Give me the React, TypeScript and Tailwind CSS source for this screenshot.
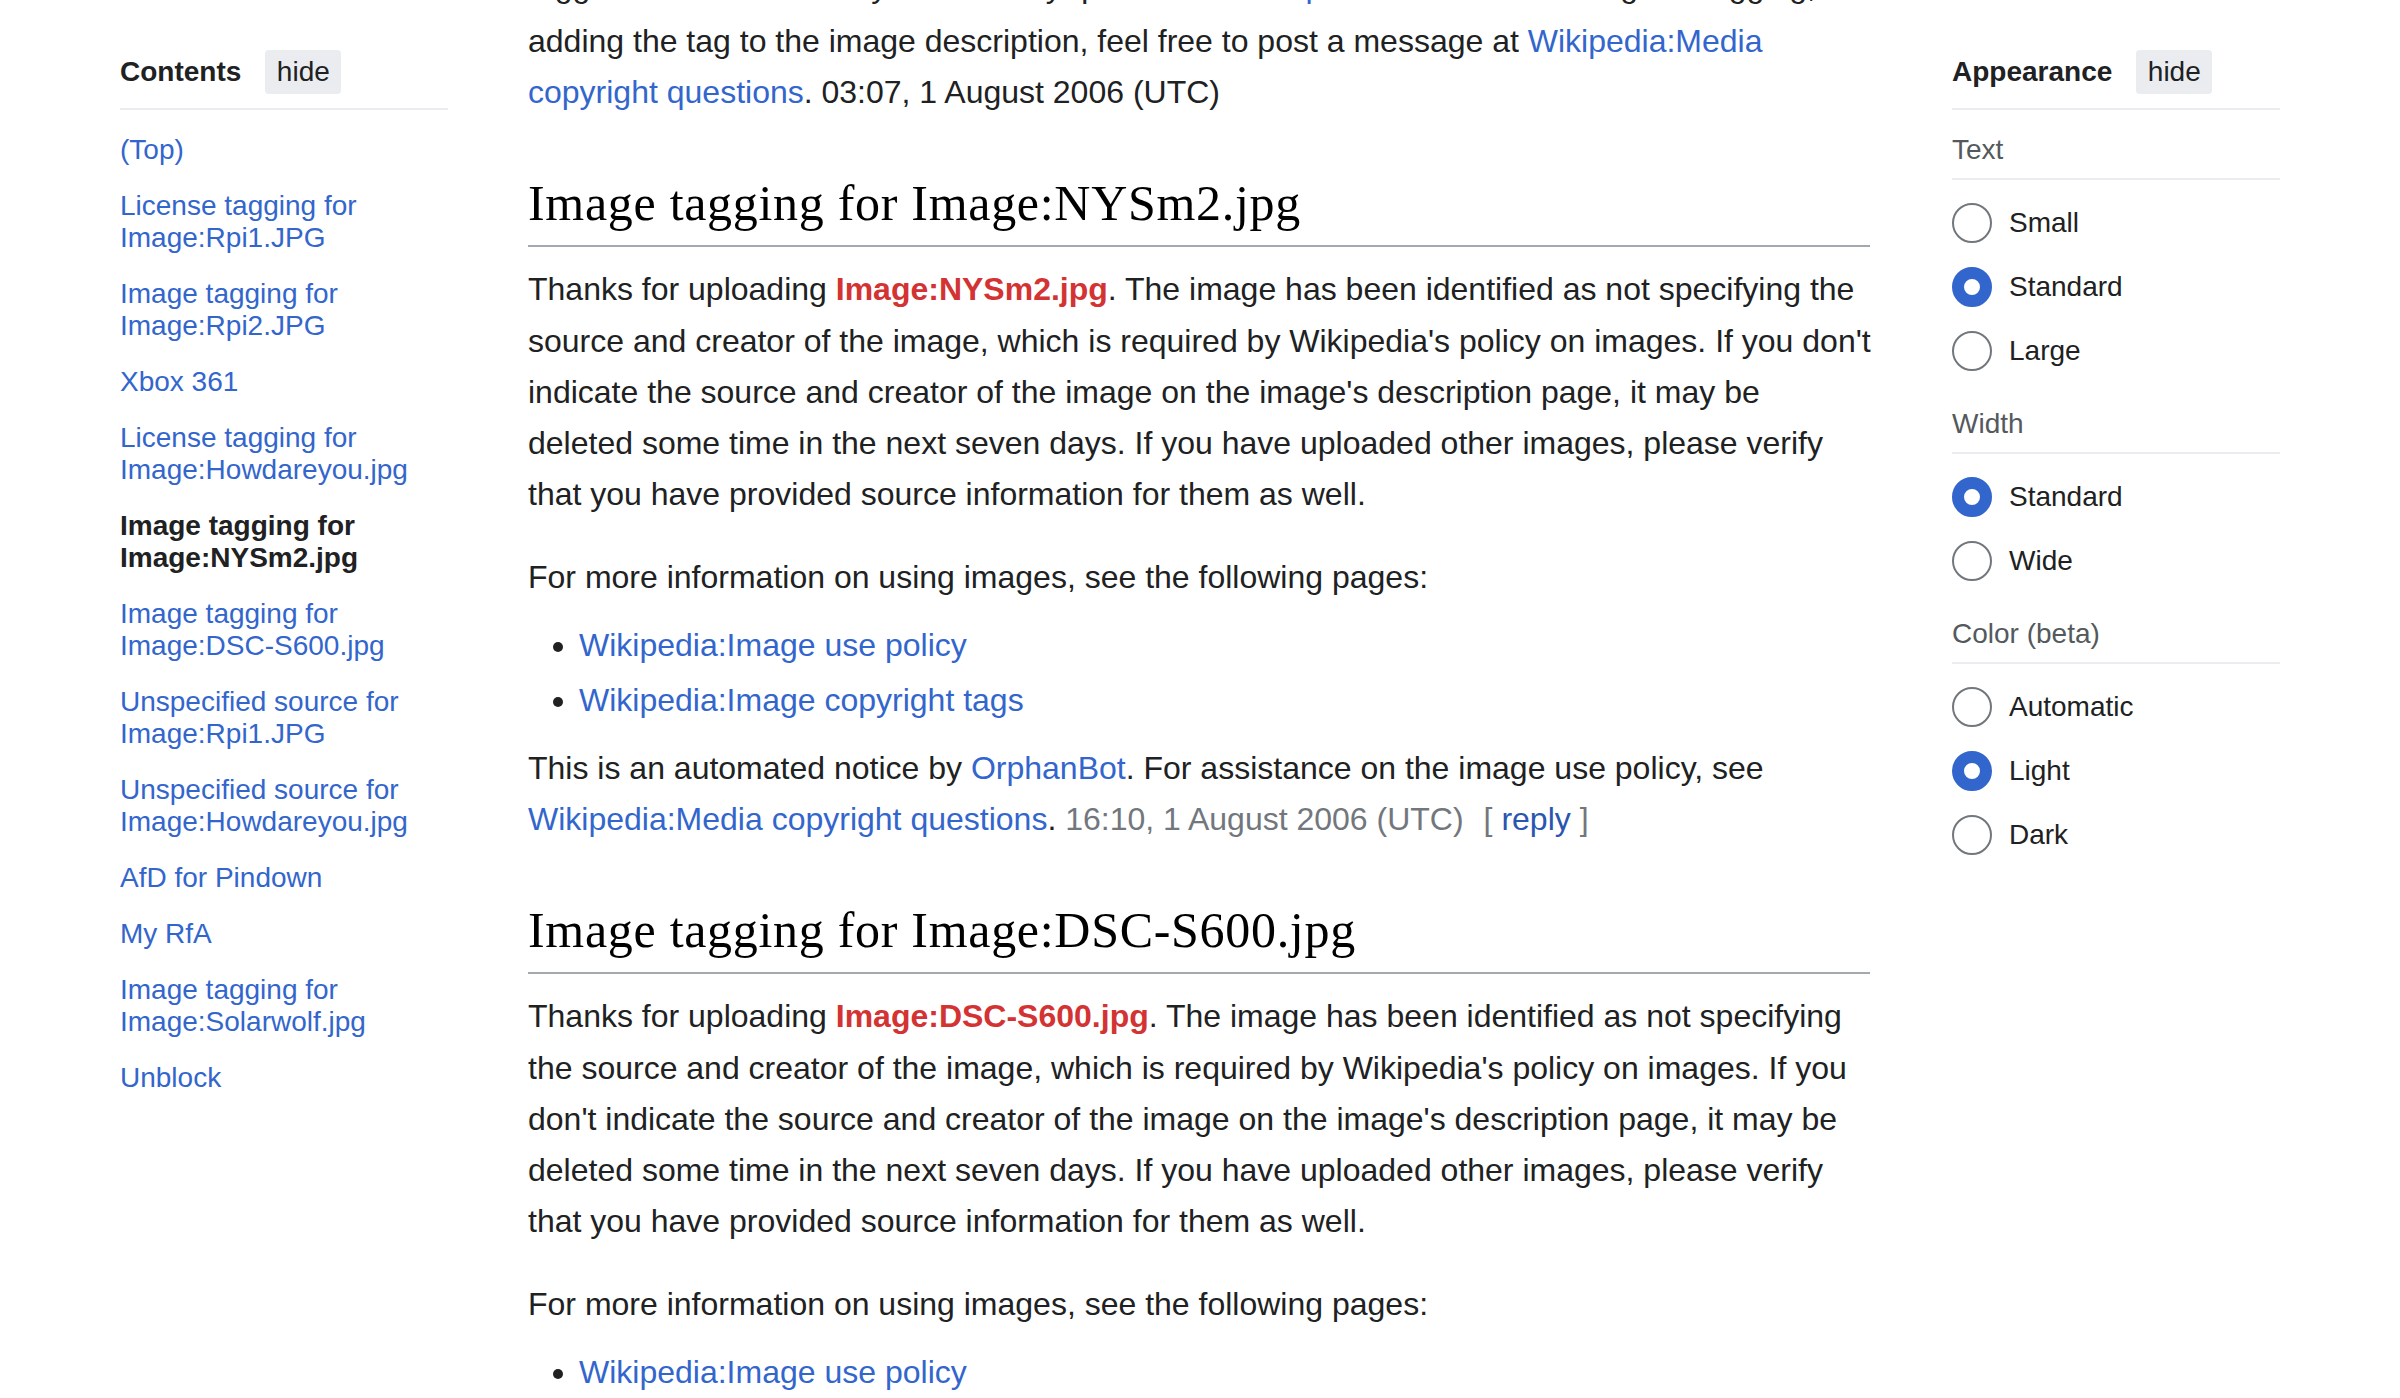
import React from "react";

const SANS = "font-['Liberation_Sans',Arial,Helvetica,sans-serif]";

function Radio({ checked }: { checked?: boolean }) {
  return checked ? (
    <span className="box-border block w-[40px] h-[40px] rounded-full border-[12px] border-[#3366cc] bg-white shrink-0" />
  ) : (
    <span className="box-border block w-[40px] h-[40px] rounded-full border-2 border-[#72777d] bg-white shrink-0" />
  );
}

function Option({ label, checked }: { label: string; checked?: boolean }) {
  return (
    <div className="flex items-center h-[64px] gap-[17px]">
      <Radio checked={checked} />
      <span className="text-[28px] leading-[32px] text-[#202122]">{label}</span>
    </div>
  );
}

function Section({
  title,
  options,
  first,
}: {
  title: string;
  options: { label: string; checked?: boolean }[];
  first?: boolean;
}) {
  return (
    <div className={first ? "pt-[24px]" : "pt-[25px]"}>
      <div className="text-[28px] leading-[32px] text-[#54595d] pb-[12px] border-b-2 border-[#eaecf0]">
        {title}
      </div>
      <div className="pt-[11px]">
        {options.map((o) => (
          <Option key={o.label} label={o.label} checked={o.checked} />
        ))}
      </div>
    </div>
  );
}

function HideButton() {
  return (
    <span className="flex items-center justify-center w-[76px] h-[44px] rounded-[4px] bg-[#eaecf0] text-[28px] text-[#202122]">
      hide
    </span>
  );
}

const tocItems: { lines: string[]; active?: boolean }[] = [
  { lines: ["(Top)"] },
  { lines: ["License tagging for", "Image:Rpi1.JPG"] },
  { lines: ["Image tagging for", "Image:Rpi2.JPG"] },
  { lines: ["Xbox 361"] },
  { lines: ["License tagging for", "Image:Howdareyou.jpg"] },
  { lines: ["Image tagging for", "Image:NYSm2.jpg"], active: true },
  { lines: ["Image tagging for", "Image:DSC-S600.jpg"] },
  { lines: ["Unspecified source for", "Image:Rpi1.JPG"] },
  { lines: ["Unspecified source for", "Image:Howdareyou.jpg"] },
  { lines: ["AfD for Pindown"] },
  { lines: ["My RfA"] },
  { lines: ["Image tagging for", "Image:Solarwolf.jpg"] },
  { lines: ["Unblock"] },
];

const A = "text-[#3366cc]";
const RED = "text-[#d33333] font-bold";

function Heading({ children }: { children: React.ReactNode }) {
  return (
    <h2 className="mt-[53px] pb-[9px] border-b-2 border-[#a2a9b1] font-['Liberation_Serif','Times_New_Roman',serif] text-[50px] leading-[65px] tracking-[0.7px] font-normal text-black whitespace-nowrap">
      {children}
    </h2>
  );
}

export default function App() {
  return (
    <div className={`${SANS} w-[2400px] h-[1398px] overflow-hidden bg-white text-[#202122]`}>
      <div className="flex pl-[120px]">
        {/* Left: Contents */}
        <aside className="w-[328px] shrink-0 pt-[50px]">
          <div className="flex items-center h-[44px] gap-[24px]">
            <span className="text-[28px] font-bold leading-[32px] text-[#202122]">Contents</span>
            <HideButton />
          </div>
          <div className="mt-[14px] h-[2px] bg-[#eaecf0]" />
          <ul className="pt-[12px]">
            {tocItems.map((it, i) => (
              <li
                key={i}
                className={`py-[12px] text-[28px] leading-[32px] ${
                  it.active ? "font-bold text-[#202122]" : "text-[#3366cc]"
                }`}
              >
                {it.lines.map((l, j) => (
                  <React.Fragment key={j}>
                    {j > 0 && <br />}
                    {l}
                  </React.Fragment>
                ))}
              </li>
            ))}
          </ul>
        </aside>

        {/* Main content */}
        <main className="w-[1342px] shrink-0 ml-[80px] text-[32px] leading-[51.2px]">
          <p className="mt-[-44px] whitespace-nowrap">
            <span className="block leading-[60px]">
              tagged with a license. If you have any questions about <span className={A}>permission</span> for the image or tagging,
            </span>
            adding the tag to the image description, feel free to post a message at{" "}
            <span className={A}>Wikipedia:Media</span>
            <br />
            <span className={A}>copyright questions</span>. 03:07, 1 August 2006 (UTC)
          </p>

          <Heading>Image tagging for Image:NYSm2.jpg</Heading>

          <p className="mt-[17px] whitespace-nowrap">
            Thanks for uploading <span className={RED}>Image:NYSm2.jpg</span>. The image has been identified as not specifying the
            <br />
            source and creator of the image, which is required by Wikipedia's policy on images. If you don't
            <br />
            indicate the source and creator of the image on the image's description page, it may be
            <br />
            deleted some time in the next seven days. If you have uploaded other images, please verify
            <br />
            that you have provided source information for them as well.
          </p>

          <p className="mt-[32px] whitespace-nowrap">For more information on using images, see the following pages:</p>

          <ul className="mt-[16px] ml-[51px] list-disc marker:text-[#202122]">
            <li className={A}>Wikipedia:Image use policy</li>
            <li className={`${A} mt-[4px]`}>Wikipedia:Image copyright tags</li>
          </ul>

          <p className="mt-[17px] whitespace-nowrap">
            This is an automated notice by <span className={A}>OrphanBot</span>. For assistance on the image use policy, see
            <br />
            <span className={A}>Wikipedia:Media copyright questions</span>.{" "}
            <span className="text-[#72777d]">16:10, 1 August 2006 (UTC)</span>
            <span className="ml-[20px] text-[#72777d]">
              [ <span className="text-[#2a55b0]">reply</span> ]
            </span>
          </p>

          <Heading>Image tagging for Image:DSC-S600.jpg</Heading>

          <p className="mt-[17px] whitespace-nowrap">
            Thanks for uploading <span className={RED}>Image:DSC-S600.jpg</span>. The image has been identified as not specifying
            <br />
            the source and creator of the image, which is required by Wikipedia's policy on images. If you
            <br />
            don't indicate the source and creator of the image on the image's description page, it may be
            <br />
            deleted some time in the next seven days. If you have uploaded other images, please verify
            <br />
            that you have provided source information for them as well.
          </p>

          <p className="mt-[32px] whitespace-nowrap">For more information on using images, see the following pages:</p>

          <ul className="mt-[16px] ml-[51px] list-disc marker:text-[#202122]">
            <li className={A}>Wikipedia:Image use policy</li>
            <li className={`${A} mt-[4px]`}>Wikipedia:Image copyright tags</li>
          </ul>
        </main>

        {/* Right: Appearance */}
        <aside className="w-[328px] shrink-0 ml-[82px] pt-[50px]">
          <div className="flex items-center h-[44px] gap-[24px]">
            <span className="text-[28px] font-bold leading-[32px] text-[#202122]">Appearance</span>
            <HideButton />
          </div>
          <div className="mt-[14px] h-[2px] bg-[#eaecf0]" />
          <Section
            first
            title="Text"
            options={[{ label: "Small" }, { label: "Standard", checked: true }, { label: "Large" }]}
          />
          <Section title="Width" options={[{ label: "Standard", checked: true }, { label: "Wide" }]} />
          <Section
            title="Color (beta)"
            options={[{ label: "Automatic" }, { label: "Light", checked: true }, { label: "Dark" }]}
          />
        </aside>
      </div>
    </div>
  );
}
